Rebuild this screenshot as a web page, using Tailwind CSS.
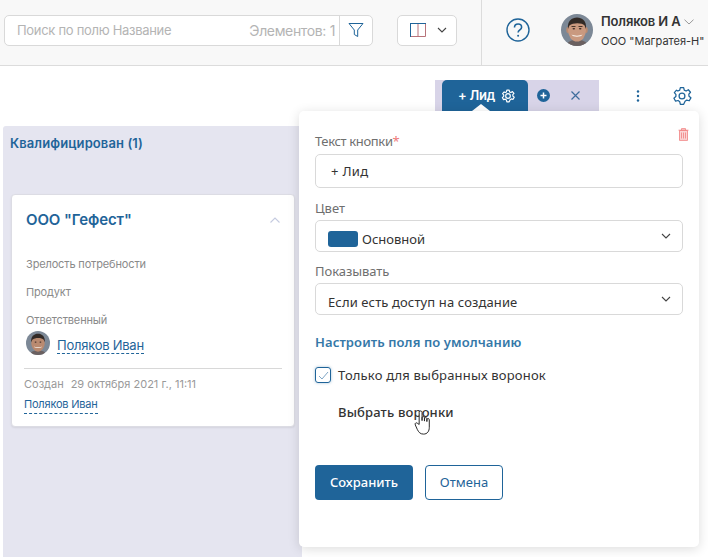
<!DOCTYPE html>
<html lang="ru"><head><meta charset="utf-8">
<script src="https://cdn.jsdelivr.net/npm/@tailwindcss/browser@4"></script>
</head>
<body class="bg-white">
<div class="relative w-[708px] h-[557px] overflow-hidden bg-white font-['Inter','Noto_Sans',sans-serif]">
  <header class="h-[66px] bg-[#f8f8f8] border-b border-[#dcdcdc] flex items-stretch">
    <div class="w-[482px] border-r border-[#dcdcdc] flex items-center pl-1 pb-[5px] shrink-0">
      <div class="w-[369px] h-[31px] bg-white border border-[#d9d9d9] rounded-[5px] flex items-center">
        <span class="ml-[12px] mt-[2px] text-[13px] tracking-[-0.3px] text-[#b4b4b4] whitespace-nowrap">Поиск по полю Название</span>
        <span class="ml-auto mr-[4px] text-[14px] tracking-[-0.35px] text-[#b4b4b4] whitespace-nowrap">Элементов: 1</span>
        <span class="w-[33px] h-full border-l border-[#d9d9d9] flex items-center justify-center shrink-0">
          <svg width="18" height="18" viewBox="0 0 18 18" fill="none" stroke="#1f6499" stroke-width="1" stroke-linejoin="round"><path d="M2 2.500h14l-5.300 6.500v6.500l-3.400-2V9z"/></svg>
        </span>
      </div>
      <div class="ml-[24px] w-[60px] h-[31px] bg-white border border-[#d9d9d9] rounded-[5px] flex items-center pl-[12px] gap-[11px]">
        <svg width="16" height="14" viewBox="0 0 16 14" fill="none" stroke-width="1"><path d="M.5 13.500h15M15.500 .5v13M8 .5v13" stroke="#b8737a"/><path d="M0 .5h16M.5 0v14" stroke="#1f6499"/></svg>
        <svg width="10" height="6" viewBox="0 0 10 6" fill="none" stroke="#444" stroke-width="1.100"><path d="M1 1l4 4 4-4"/></svg>
      </div>
    </div>
    <div class="flex-1 flex items-center pb-[5px] min-w-0">
      <svg class="ml-[24px] shrink-0" width="24" height="24" viewBox="0 0 24 24" fill="none" stroke="#1f6499" stroke-width="1.400"><circle cx="12" cy="12" r="11"/><path d="M8.500 9.500c0-2.200 1.600-3.500 3.600-3.500s3.500 1.300 3.500 3.200c0 2.600-3.500 2.700-3.500 5.300" stroke-width="1.600"/><circle cx="12.100" cy="17.700" r="1" fill="#1f6499" stroke="none"/></svg>
      <svg class="ml-[31px] shrink-0" width="32" height="32" viewBox="0 0 32 32"><defs><clipPath id="a"><circle cx="16" cy="16" r="16"/></clipPath><filter id="s" x="-10%" y="-10%" width="120%" height="120%"><feGaussianBlur stdDeviation="0.600"/></filter></defs><g clip-path="url(#a)"><rect width="32" height="32" fill="#7c8896"/><g filter="url(#s)"><path d="M5 32c1-5 6-6 11-6s10 1 11 6z" fill="#6a6060"/><ellipse cx="6.800" cy="16" rx="1.500" ry="3" fill="#b98a70"/><ellipse cx="25.200" cy="16" rx="1.500" ry="3" fill="#b98a70"/><ellipse cx="16" cy="16" rx="9" ry="11.500" fill="#c9997f"/><path d="M7 15C6 7 11 3.500 16 3.500S26 7 25 15l-1.400-3.500C21 8.500 12 8.500 8.400 11.500z" fill="#332b28"/><path d="M10.500 12.500h4M17.500 12.500h4" stroke="#4a362c" stroke-width="1.100" fill="none"/><ellipse cx="12.800" cy="14.800" rx="1.300" ry="0.800" fill="#3a2a26"/><ellipse cx="19.200" cy="14.800" rx="1.300" ry="0.800" fill="#3a2a26"/><path d="M10.500 20.500c3 1.500 8 1.500 11 0-1 3-10 3-11 0z" fill="#f7efe8"/></g></g></svg>
      <div class="ml-[8px] min-w-0 pt-[1px]">
        <div class="flex items-center h-[17px] pt-[1px]"><span class="text-[13px] font-semibold text-[#333] tracking-[-0.15px] whitespace-nowrap">Поляков И А</span>
          <svg class="ml-[4px]" width="10" height="6" viewBox="0 0 10 6" fill="none" stroke="#999" stroke-width="1"><path d="M.5.700L5 5 9.500.700"/></svg></div>
        <div class="mt-[3px] text-[11px] leading-[16px] text-[#333] whitespace-nowrap">ООО "Магратея-Н"</div>
      </div>
    </div>
  </header>

  <div class="h-[60px] pt-[14px] flex items-start">
    <div class="ml-[435px] w-[164px] h-[31px] bg-[#d8d4e8] flex items-stretch pl-[7px]">
      <div class="relative w-[86px] h-[31px] bg-[#1f6499] rounded-t-[5px] flex items-center pl-[16px] gap-[6px] text-white">
        <span class="text-[13px] font-semibold tracking-[-0.25px] whitespace-nowrap">+ Лид</span>
        <svg width="14" height="14" viewBox="0 0 24 24" fill="none" stroke="#fff" stroke-width="2" stroke-linejoin="round"><path d="M10 2h4l.7 3 2.200 1 2.700-1.500 2.600 3-2 2.300.2 2.400 2.300 2-2 3.500-3-.8-2 1.400L14 22h-4l-.7-3.200-2-1.400-3 .8-2-3.500 2.300-2 .2-2.400-2-2.300 2.600-3L7.100 6l2.200-1z"/><circle cx="12" cy="12" r="4"/></svg>
        <span class="absolute left-[30px] bottom-0 w-0 h-0 border-l-[9px] border-r-[9px] border-b-[7px] border-l-transparent border-r-transparent border-b-white"></span>
      </div>
      <svg class="ml-[9px] mt-[9px]" width="13" height="13" viewBox="0 0 13 13"><circle cx="6.500" cy="6.500" r="6.500" fill="#1f6499"/><path d="M6.500 3.500v6M3.500 6.500h6" stroke="#fff" stroke-width="1.500"/></svg>
      <svg class="ml-[20px] mt-[10px]" width="11" height="11" viewBox="0 0 11 11" fill="none" stroke="#3f6d9c" stroke-width="1.200"><path d="M1.500 1.500l8 8M9.500 1.500l-8 8"/></svg>
    </div>
    <svg class="ml-[37px] mt-[10px]" width="4" height="12" viewBox="0 0 4 12" fill="#1f6499"><circle cx="2" cy="1.500" r="1.200"/><circle cx="2" cy="6" r="1.200"/><circle cx="2" cy="10.500" r="1.200"/></svg>
    <svg class="ml-[32px] mt-[6px]" width="20" height="20" viewBox="0 0 24 24" fill="none" stroke="#1f6499" stroke-width="1.500" stroke-linejoin="round"><path d="M10 2h4l.7 3 2.200 1 2.700-1.500 2.600 3-2 2.300.2 2.400 2.300 2-2 3.500-3-.8-2 1.400L14 22h-4l-.7-3.200-2-1.400-3 .8-2-3.500 2.300-2 .2-2.400-2-2.300 2.600-3L7.100 6l2.200-1z"/><circle cx="12" cy="12" r="3.500"/></svg>
  </div>

  <section class="ml-[3px] w-[299px] h-[431px] bg-[#e5e5f0] rounded-tl-[3px] pt-[9px]">
    <h2 class="ml-[7px] text-[13px] leading-[17px] font-semibold text-[#1f6499] tracking-[0.1px]">Квалифицирован (1)</h2>
    <article class="mt-[42px] ml-[8px] w-[284px] h-[233px] bg-white border border-[#dcdce4] rounded-[4px] shadow-[0_1px_2px_rgba(0,0,0,0.08)] px-[14px]">
      <div class="flex items-center justify-between pt-[15px]">
        <span class="text-[15px] leading-[20px] font-semibold text-[#1f6499] tracking-[-0.1px]">ООО "Гефест"</span>
        <svg width="10" height="6" viewBox="0 0 10 6" fill="none" stroke="#c5cbe0" stroke-width="1.100"><path d="M.5 5.500L5 1l4.500 4.500"/></svg>
      </div>
      <div class="mt-[27px] text-[11px] leading-[14px] text-[#8a8a8a] tracking-[-0.15px]">Зрелость потребности</div>
      <div class="mt-[14px] text-[11px] leading-[14px] text-[#8a8a8a] tracking-[-0.15px]">Продукт</div>
      <div class="mt-[14px] text-[11px] leading-[14px] text-[#8a8a8a] tracking-[-0.15px]">Ответственный</div>
      <div class="mt-[4px] flex items-center gap-[7px]">
        <svg width="24" height="24" viewBox="0 0 32 32"><defs><clipPath id="b"><circle cx="16" cy="16" r="16"/></clipPath></defs><g clip-path="url(#b)"><rect width="32" height="32" fill="#7c8896"/><g filter="url(#s)"><path d="M5 32c1-5 6-6 11-6s10 1 11 6z" fill="#6a6060"/><ellipse cx="16" cy="16" rx="9" ry="11.500" fill="#b98a70"/><path d="M7 15C6 7 11 3.500 16 3.500S26 7 25 15l-1.400-3.500C21 8.500 12 8.500 8.400 11.500z" fill="#332b28"/><ellipse cx="12.800" cy="14.800" rx="1.300" ry="0.800" fill="#3a2a26"/><ellipse cx="19.200" cy="14.800" rx="1.300" ry="0.800" fill="#3a2a26"/><path d="M10.500 20.500c3 1.500 8 1.500 11 0-1 3-10 3-11 0z" fill="#f7efe8"/></g></g></svg>
        <span class="mt-[4px] text-[13px] leading-[16px] text-[#1f6499] tracking-[-0.25px] border-b border-dashed border-[#1f6499] whitespace-nowrap">Поляков Иван</span>
      </div>
      <div class="-ml-[2px] mt-[13px] w-[258px] border-t border-[#d8d8d8] pt-[8px]">
        <div class="text-[11px] leading-[14px] text-[#999] whitespace-nowrap">Создан<span class="ml-[7px]">29 октября 2021 г., 11:11</span></div>
        <div class="mt-[6px] w-fit text-[11px] leading-[14px] pb-[2px] text-[#1f6499] border-b border-dashed border-[#1f6499] whitespace-nowrap tracking-[-0.2px]">Поляков Иван</div>
      </div>
    </article>
  </section>

  <aside class="absolute left-[299px] top-[111px] w-[400px] h-[436px] bg-white rounded-[5px] shadow-[0_2px_12px_rgba(0,0,0,0.14)] px-[16px] pt-[21px] font-['Noto_Sans','Open_Sans',sans-serif]">
    <svg class="absolute right-[10px] top-[17px]" width="11" height="13" viewBox="0 0 11 13" fill="#fbd5d5" stroke="#f08080" stroke-width="0.800"><path d="M3.500 2V.6h4V2M.5 2.200h10M1.500 2.500v9.900h8V2.500z"/><path d="M3.500 4.500v6M5.500 4.500v6M7.500 4.500v6" fill="none"/></svg>
    <label class="block text-[13px] leading-[18px] text-[#6f6f6f]"><span class="tracking-[-0.35px]">Текст кнопки</span><span class="text-[#ee7a7a]">*</span></label>
    <div class="mt-[4px] h-[34px] border border-[#d9d9d9] rounded-[5px] pl-[15px] pt-[2px] flex items-center text-[13px] text-[#333] tracking-[0.3px]">+ Лид</div>
    <label class="block mt-[11px] text-[13px] leading-[18px] text-[#6f6f6f]">Цвет</label>
    <div class="mt-[3px] h-[32px] border border-[#d9d9d9] rounded-[5px] pl-[12px] pr-[11px] flex items-center">
      <span class="w-[30px] h-[16px] mt-[6px] rounded-[3px] bg-[#1f6499]"></span>
      <span class="ml-[4px] mt-[8px] text-[13px] text-[#333]">Основной</span>
      <svg class="ml-auto" width="10" height="6" viewBox="0 0 10 6" fill="none" stroke="#444" stroke-width="1.100"><path d="M1 1l4 4 4-4"/></svg>
    </div>
    <label class="block mt-[10px] text-[13px] leading-[18px] text-[#6f6f6f] tracking-[-0.05px]">Показывать</label>
    <div class="mt-[3px] h-[32px] border border-[#d9d9d9] rounded-[5px] pl-[12px] pr-[11px] flex items-center">
      <span class="mt-[8px] text-[13px] text-[#333] tracking-[0.12px]">Если есть доступ на создание</span>
      <svg class="ml-auto" width="10" height="6" viewBox="0 0 10 6" fill="none" stroke="#444" stroke-width="1.100"><path d="M1 1l4 4 4-4"/></svg>
    </div>
    <div class="mt-[18px] text-[13px] leading-[18px] font-semibold text-[#3578a8] tracking-[0.1px]">Настроить поля по умолчанию</div>
    <div class="mt-[15px] flex items-center gap-[7px]">
      <span class="w-[16px] h-[16px] border border-[#1f6499] rounded-[3px] flex items-center justify-center shadow-[0_0_3px_rgba(31,100,153,0.4)]">
        <svg width="11" height="9" viewBox="0 0 11 9" fill="none" stroke="#7fa6c6" stroke-width="1"><path d="M1 5l3 3 6-7"/></svg>
      </span>
      <span class="text-[13px] leading-[18px] text-[#333] tracking-[0.18px]">Только для выбранных воронок</span>
    </div>
    <div class="mt-[19px] ml-[23px] text-[13px] leading-[18px] font-medium text-[#333] tracking-[0.15px]">Выбрать воронки</div>
    <div class="mt-[44px] flex gap-[12px]">
      <span class="w-[98px] h-[35px] bg-[#1f6499] rounded-[4px] flex items-center justify-center text-[13px] font-medium text-white">Сохранить</span>
      <span class="w-[78px] h-[35px] border border-[#1f6499] rounded-[4px] flex items-center justify-center text-[13px] text-[#1f6499]">Отмена</span>
    </div>
    <svg class="absolute left-[115px] top-[299px]" width="19" height="27" viewBox="0 0 19 28" fill="#fff" stroke="#222" stroke-width="1" stroke-linejoin="round"><path d="M5 15V2.500c0-2 3-2 3 0V11V8c0-1.600 2.500-1.600 2.500 0v3.500V9c0-1.500 2.500-1.500 2.500 0v3V10c0-1.500 2.500-1.500 2.500 0v8c0 4-2 7-6 7-3.500 0-5-2-6.500-5L1 15.500c-1-2 1.500-3 2.500-1.500z"/></svg>
  </aside>
</div>
</body></html>
